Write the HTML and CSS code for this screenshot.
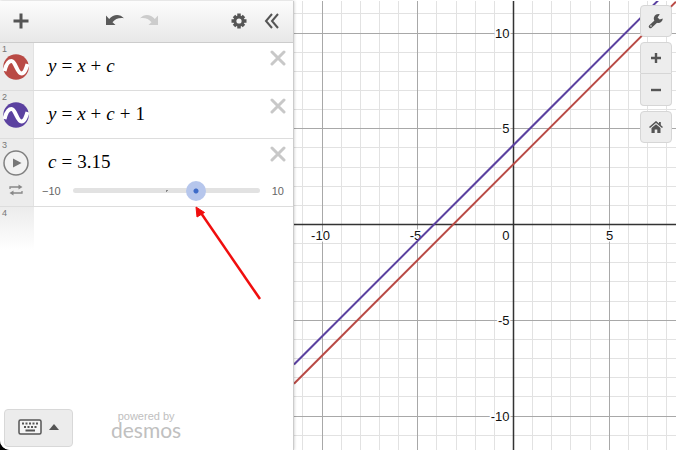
FILE: index.html
```html
<!DOCTYPE html>
<html lang="en">
  <head>
    <meta charset="UTF-8" />
    <title>Graphing Calculator</title>
    <link rel="stylesheet" href="styles.css">
  </head>
  <body>
    <div class="app">
      <div class="panel">
        <!-- Toolbar -->
        <div class="toolbar">
          <button class="tool" aria-label="Add item">
            <svg width="16" height="16" viewBox="0 0 16 16"><path d="M8 .5v15M.5 8h15" stroke="#555" stroke-width="3" /></svg>
          </button>
          <div class="history">
            <button class="tool" aria-label="Undo">
              <svg width="20" height="14" viewBox="0 0 20 14"><path d="M1 1.500v9.500h9.500L7.500 8.200C10 5.200 14 3.500 19 4.300C15 -.5 8.500 -.2 4.200 4.900z" fill="#5a5a5a" /></svg>
            </button>
            <button class="tool" aria-label="Redo" disabled>
              <svg width="20" height="14" viewBox="0 0 20 14"><path d="M19 1.500v9.500H9.500L12.500 8.200C10 5.200 6 3.500 1 4.300C5 -.5 11.500 -.2 15.800 4.900z" fill="#ccc" /></svg>
            </button>
          </div>
          <button class="tool" aria-label="Edit list">
            <svg width="16" height="16" viewBox="0 0 16 16">
              <g stroke="#555" stroke-width="3.500"><path d="M8 .5v15M.5 8h15M3 3l10 10M13 3L3 13" /></g>
              <circle cx="8" cy="8" r="5.500" fill="#555" />
              <circle cx="8" cy="8" r="2.600" fill="#f4f4f4" />
            </svg>
          </button>
          <button class="tool" aria-label="Hide list">
            <svg width="16" height="16" viewBox="0 0 16 16"><path d="M8 1L2 8l6 7M14 1L8 8l6 7" fill="none" stroke="#555" stroke-width="2" /></svg>
          </button>
        </div>

        <!-- Expression list -->
        <div class="row">
          <div class="gutter">
            <span class="num">1</span>
            <button class="icon" aria-label="Hide graph 1">
              <svg width="26" height="26" viewBox="0 0 26 26">
                <circle cx="13" cy="13" r="12.800" fill="#b94a45" />
                <path d="M1.500 17C3 11 5.500 7 8.500 7C12.500 7 14 19.500 18.500 19.500C21.500 19.500 23 15 24.500 10" fill="none" stroke="#fff" stroke-width="4" />
              </svg>
            </button>
          </div>
          <div class="expr">
            <div class="math"><i>y</i><b>=</b><i>x</i><b>+</b><i>c</i></div>
          </div>
          <button class="delete" aria-label="Delete 1">
            <svg width="16" height="16" viewBox="0 0 16 16"><path d="M2 2l12 12M14 2L2 14" stroke="#c8c8c8" stroke-width="3" stroke-linecap="round" /></svg>
          </button>
        </div>
        <div class="row">
          <div class="gutter">
            <span class="num">2</span>
            <button class="icon" aria-label="Hide graph 2">
              <svg width="26" height="26" viewBox="0 0 26 26">
                <circle cx="13" cy="13" r="12.800" fill="#5b41a0" />
                <path d="M1.500 17C3 11 5.500 7 8.500 7C12.500 7 14 19.500 18.500 19.500C21.500 19.500 23 15 24.500 10" fill="none" stroke="#fff" stroke-width="4" />
              </svg>
            </button>
          </div>
          <div class="expr">
            <div class="math"><i>y</i><b>=</b><i>x</i><b>+</b><i>c</i><b>+</b>1</div>
          </div>
          <button class="delete" aria-label="Delete 2">
            <svg width="16" height="16" viewBox="0 0 16 16"><path d="M2 2l12 12M14 2L2 14" stroke="#c8c8c8" stroke-width="3" stroke-linecap="round" /></svg>
          </button>
        </div>
        <div class="row">
          <div class="gutter">
            <span class="num">3</span>
            <button class="icon" aria-label="Play slider">
              <svg width="26" height="26" viewBox="0 0 26 26">
                <circle cx="13" cy="13" r="12" fill="#f2f2f2" stroke="#808080" stroke-width="1.500" />
                <path d="M10 8.500l8.500 4.500l-8.500 4.500z" fill="#777" />
              </svg>
            </button>
            <button class="icon loop" aria-label="Loop mode">
              <svg width="14" height="12" viewBox="0 0 14 12">
                <path d="M1 5V3h9M13 7v2H4" fill="none" stroke="#888" stroke-width="1.300" />
                <path d="M9.500 .5l4 2.500l-4 2.500zM4.500 6.500v5L.5 9z" fill="#888" />
              </svg>
            </button>
          </div>
          <div class="expr">
            <div class="math"><i>c</i><b>=</b><span id="value">3.15</span></div>
            <div class="slider">
              <span class="limit">−10</span>
              <div class="track">
                <input type="range" id="c" min="-10" max="10" step="0.01" value="3.15" aria-label="c" />
              </div>
              <span class="limit">10</span>
            </div>
          </div>
          <button class="delete" aria-label="Delete 3">
            <svg width="16" height="16" viewBox="0 0 16 16"><path d="M2 2l12 12M14 2L2 14" stroke="#c8c8c8" stroke-width="3" stroke-linecap="round" /></svg>
          </button>
        </div>
        <div class="row empty">
          <div class="gutter"><span class="num">4</span></div>
        </div>

        <!-- pointer to the slider -->
        <svg class="arrow" width="70" height="98" viewBox="0 0 70 98">
          <path d="M67 95L8 9" stroke="#f00e0e" stroke-width="2.500" />
          <path d="M3 3l8.500 5.500l-7.500 4.500z" fill="#f00e0e" stroke="#f00e0e" />
        </svg>

        <div class="footer">
          <button class="keypad" aria-label="Show keypad">
            <svg width="24" height="16" viewBox="0 0 24 16">
              <rect x="1" y="1" width="22" height="14" rx="1.500" fill="#f5f5f5" stroke="#555" stroke-width="1.500" />
              <path d="M4 4.500h17M6 8h13" stroke="#555" stroke-width="2" stroke-dasharray="2 1.500" />
              <path d="M7.500 11.500h9.500" stroke="#555" stroke-width="1.800" />
            </svg>
            <svg width="10" height="6" viewBox="0 0 10 6"><path d="M0 6l5-6l5 6z" fill="#555" /></svg>
          </button>
          <div class="brand">
            <div class="powered">powered by</div>
            <div class="logo">desmos</div>
          </div>
        </div>
      </div>

      <div class="graph">
        <svg id="plot"></svg>
        <div class="controls">
          <button aria-label="Graph settings">
            <svg width="16" height="16" viewBox="0 0 16 16">
              <path d="M2.500 13.500L9 7.500" stroke="#555" stroke-width="3.500" stroke-linecap="round" />
              <path d="M11.800 1.200A4.500 4.500 0 1 0 14.800 5.400L11.700 6.500L9.600 4.500z" fill="#555" />
              <circle cx="3" cy="13" r=".8" fill="#eee" />
            </svg>
          </button>
          <div class="zoom">
            <button aria-label="Zoom in">
              <svg width="12" height="12" viewBox="0 0 12 12"><path d="M6 1v10M1 6h10" stroke="#555" stroke-width="2.400" /></svg>
            </button>
            <button aria-label="Zoom out">
              <svg width="12" height="12" viewBox="0 0 12 12"><path d="M1 6h10" stroke="#555" stroke-width="2.400" /></svg>
            </button>
          </div>
          <button aria-label="Default viewport">
            <svg width="14" height="12" viewBox="0 0 14 12">
              <path d="M.5 6.500L7 1l6.500 5.500" fill="none" stroke="#555" stroke-width="1.600" />
              <path d="M2.500 7L7 3.200L11.500 7v5H8.300V8.500H5.700V12H2.500zM10 1h1.800v3.500L10 3z" fill="#555" />
            </svg>
          </button>
        </div>
      </div>
    </div>

    <script>
      const UNIT = 19.15; // pixels per graph unit
      const plot = document.getElementById("plot");
      const slider = document.getElementById("c");

      function line(x1, y1, x2, y2, cls) {
        return `<line x1="${x1}" y1="${y1}" x2="${x2}" y2="${y2}" class="${cls}" />`;
      }

      function draw() {
        const w = plot.clientWidth;
        const h = plot.clientHeight;
        const ox = Math.round(w * 0.573) + 0.5;
        const oy = Math.round(h * 0.497) + 0.5;
        const c = Number(slider.value);
        let minor = "";
        let major = "";
        let labels = "";

        for (let i = Math.ceil(-ox / UNIT); i <= (w - ox) / UNIT; i++) {
          const x = Math.floor(ox + i * UNIT) + 0.5;
          if (i % 5) {
            minor += line(x, 0, x, h, "minor");
          } else if (i) {
            major += line(x, 0, x, h, "major");
            labels += `<text x="${i < 0 ? x - 2 : x}" y="${oy + 15}" text-anchor="middle">${i}</text>`;
          }
        }
        for (let j = Math.ceil((oy - h) / UNIT); j <= oy / UNIT; j++) {
          const y = Math.floor(oy - j * UNIT) + 0.5;
          if (j % 5) {
            minor += line(0, y, w, y, "minor");
          } else if (j) {
            major += line(0, y, w, y, "major");
            labels += `<text x="${ox - 4}" y="${y + 4}" text-anchor="end">${j}</text>`;
          }
        }
        labels += `<text x="${ox - 4}" y="${oy + 15}" text-anchor="end">0</text>`;

        const axes = line(0, oy, w, oy, "axis") + line(ox, 0, ox, h, "axis");
        // y = x + b from the left edge to the right edge
        const curve = (b, cls) =>
          line(0, oy + ox - b * UNIT, w, oy - (w - ox) - b * UNIT, cls);

        plot.innerHTML = minor + major + axes + labels + curve(c, "red") + curve(c + 1, "purple");
        document.getElementById("value").textContent = c;
      }

      slider.addEventListener("input", draw);
      window.addEventListener("resize", draw);
      draw();
    </script>
  </body>
</html>
```
FILE: styles.css
```css
* {
  box-sizing: border-box;
}

body {
  margin: 0;
  background: #000;
  font-family: "Liberation Sans", Arial, sans-serif;
}

button {
  padding: 0;
  border: none;
  background: none;
  cursor: pointer;
}

svg {
  display: block;
}

.app {
  display: flex;
  height: 100vh;
  padding-top: 1px;
  background: #fff;
  border-bottom-left-radius: 10px;
  overflow: hidden;
}

.panel {
  position: relative;
  z-index: 1;
  display: flex;
  flex-direction: column;
  flex: 0 0 294px;
  background: #fff;
  border-right: 1px solid #ccc;
  box-shadow: 0 0 3px rgba(0, 0, 0, 0.25);
}

.toolbar {
  display: flex;
  align-items: center;
  gap: 17px;
  height: 42px;
  padding: 0 13px 1px;
  background: linear-gradient(#fcfcfc, #e8e8e8);
  border-bottom: 1px solid #ccc;
}

.history {
  display: flex;
  flex: 1;
  gap: 14px;
  padding-left: 59px;
}

.row {
  display: flex;
  min-height: 48px;
  border-bottom: 1px solid #ddd;
}

.gutter {
  position: relative;
  width: 34px;
  padding: 11px 3px 0;
  background: #ececec;
  border-right: 1px solid #e2e2e2;
}

.num {
  position: absolute;
  top: 1px;
  left: 2px;
  font-size: 9px;
  color: #777;
}

.icon {
  display: block;
}

.loop {
  margin: 8px 0 0 6px;
}

.expr {
  flex: 1;
  padding: 12px 0 0 14px;
}

.math {
  font-family: "Liberation Serif", "Times New Roman", serif;
  font-size: 19px;
  line-height: 22px;
}

.math b {
  margin: 0 5px;
  font-weight: normal;
}

.delete {
  align-self: flex-start;
  margin: 7px 7px 0 -24px;
}

.slider {
  display: flex;
  align-items: center;
  gap: 12px;
  height: 33px;
  margin-left: -6px;
  padding: 2px 10px 0 0;
}

.limit {
  font-size: 11px;
  color: #666;
}

.track {
  flex: 1;
  height: 5px;
  display: flex;
  align-items: center;
  border-radius: 3px;
  background: radial-gradient(circle, #888 1px, #e2e2e2 1px);
}

.track input {
  flex: 1;
  height: 20px;
  margin: 0 -10px;
  background: none;
  -webkit-appearance: none;
  appearance: none;
}

.track input::-webkit-slider-thumb {
  -webkit-appearance: none;
  width: 20px;
  height: 20px;
  border-radius: 50%;
  background: radial-gradient(circle, #3e6bc8 2px, #b6c6ec 3px);
}

.empty {
  border: none;
}

.empty .gutter {
  background: linear-gradient(#ececec, #fff 90%);
  border: none;
}

.arrow {
  position: absolute;
  top: 203px;
  left: 193px;
  pointer-events: none;
}

.footer {
  display: flex;
  align-items: center;
  gap: 38px;
  margin-top: auto;
  padding: 0 4px 3px;
}

.keypad {
  display: flex;
  align-items: center;
  justify-content: center;
  gap: 7px;
  width: 69px;
  height: 38px;
  padding-bottom: 3px;
  background: #ececec;
  border: 1px solid #d8d8d8;
  border-radius: 4px;
}

.brand {
  padding-bottom: 8px;
  text-align: center;
  color: #c0c0c0;
}

.powered {
  font-size: 11px;
  line-height: 11px;
}

.logo {
  font-family: Lato, sans-serif;
  font-size: 21px;
  line-height: 16px;
}

.graph {
  position: relative;
  flex: 1;
  min-width: 0;
}

#plot {
  width: 100%;
  height: 100%;
}

#plot text {
  font-size: 13px;
  fill: #111;
  stroke: #fff;
  stroke-width: 3px;
  paint-order: stroke;
}

.minor {
  stroke: #e2e2e2;
}

.major {
  stroke: #a8a8a8;
}

.axis {
  stroke: #333;
  stroke-width: 1.5px;
}

#plot .red {
  stroke: #b94a45;
  stroke-width: 2px;
}

#plot .purple {
  stroke: #5b41a0;
  stroke-width: 2px;
}

.controls {
  position: absolute;
  top: 4px;
  right: 4px;
  display: flex;
  flex-direction: column;
  gap: 5px;
  width: 32px;
}

.controls button {
  display: flex;
  align-items: center;
  justify-content: center;
  width: 100%;
  height: 32px;
  background: #ededed;
  border: 1px solid #d6d6d6;
  border-radius: 4px;
}

.controls .zoom button:first-child {
  border-radius: 4px 4px 0 0;
}

.controls .zoom button:last-child {
  border-top: none;
  border-radius: 0 0 4px 4px;
}
```
